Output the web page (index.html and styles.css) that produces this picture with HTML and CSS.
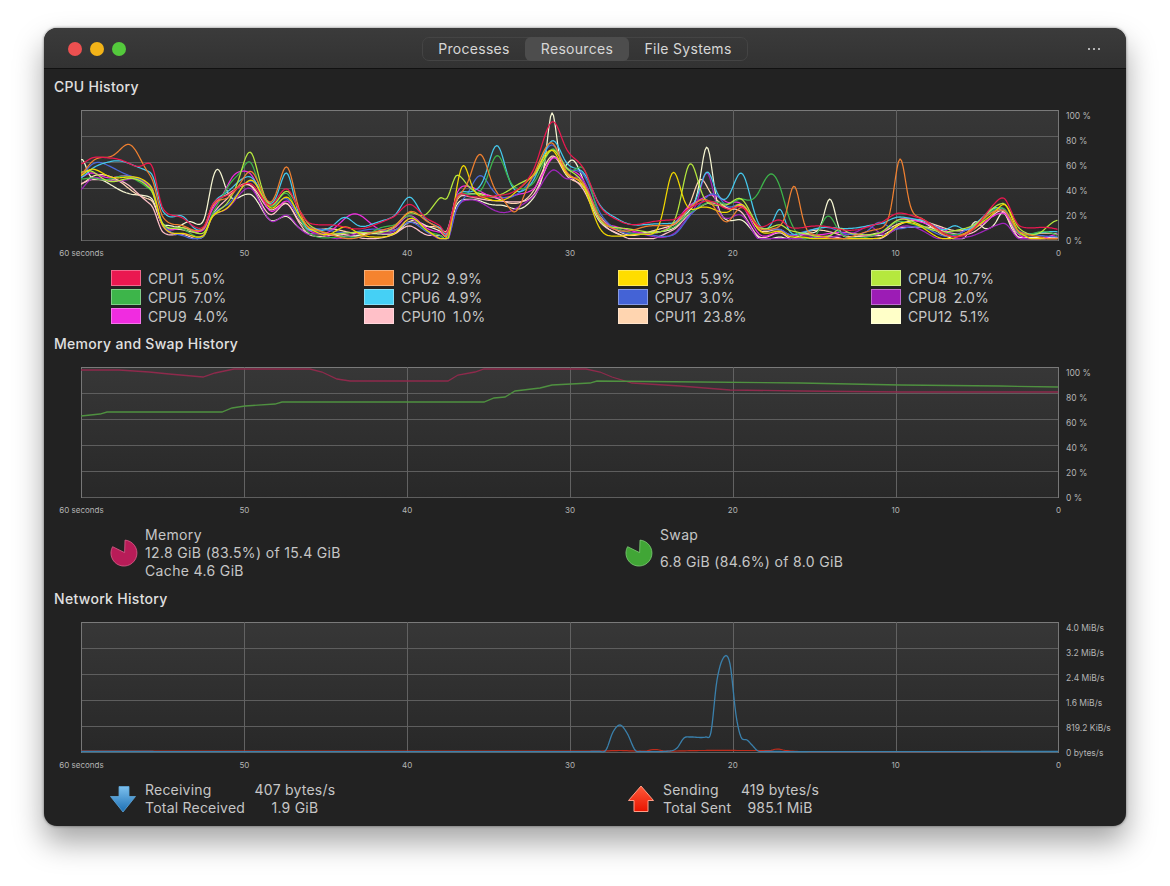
FILE: index.html
```html
<!DOCTYPE html>
<html lang="en">
<head>
<meta charset="utf-8">
<title>System Monitor</title>
<link rel="stylesheet" href="styles.css">
</head>
<body>
<main class="window">
  <header class="titlebar">
    <div class="lights"><i class="light red"></i><i class="light yellow"></i><i class="light green"></i></div>
    <nav class="tabs">
      <span class="tab t1">Processes</span>
      <span class="tab t2 active">Resources</span>
      <span class="tab t3">File Systems</span>
    </nav>
    <div class="menu"><i></i><i></i><i></i></div>
  </header>

  <section class="content">
    <h2 class="title">CPU History</h2>
    <div class="chart">
      <div class="plot-col">
        <div class="plot"><svg id="cpu" class="plot-svg" width="978" height="131" viewBox="81 110 978 131"></svg></div>
        <div class="xaxis"><span>60 seconds</span><span>50</span><span>40</span><span>30</span><span>20</span><span>10</span><span>0</span></div>
      </div>
      <div class="yaxis"><span>100 %</span><span>80 %</span><span>60 %</span><span>40 %</span><span>20 %</span><span>0 %</span></div>
    </div>
    <div class="legend">
      <div class="item"><i class="swatch c1"></i><span>CPU1</span><span class="val">5.0%</span></div>
      <div class="item"><i class="swatch c2"></i><span>CPU2</span><span class="val">9.9%</span></div>
      <div class="item"><i class="swatch c3"></i><span>CPU3</span><span class="val">5.9%</span></div>
      <div class="item"><i class="swatch c4"></i><span>CPU4</span><span class="val">10.7%</span></div>
      <div class="item"><i class="swatch c5"></i><span>CPU5</span><span class="val">7.0%</span></div>
      <div class="item"><i class="swatch c6"></i><span>CPU6</span><span class="val">4.9%</span></div>
      <div class="item"><i class="swatch c7"></i><span>CPU7</span><span class="val">3.0%</span></div>
      <div class="item"><i class="swatch c8"></i><span>CPU8</span><span class="val">2.0%</span></div>
      <div class="item"><i class="swatch c9"></i><span>CPU9</span><span class="val">4.0%</span></div>
      <div class="item"><i class="swatch c10"></i><span>CPU10</span><span class="val">1.0%</span></div>
      <div class="item"><i class="swatch c11"></i><span>CPU11</span><span class="val">23.8%</span></div>
      <div class="item"><i class="swatch c12"></i><span>CPU12</span><span class="val">5.1%</span></div>
    </div>

    <h2 class="title second">Memory and Swap History</h2>
    <div class="chart">
      <div class="plot-col">
        <div class="plot"><svg id="mem" class="plot-svg" width="978" height="131" viewBox="81 367 978 131"></svg></div>
        <div class="xaxis"><span>60 seconds</span><span>50</span><span>40</span><span>30</span><span>20</span><span>10</span><span>0</span></div>
      </div>
      <div class="yaxis"><span>100 %</span><span>80 %</span><span>60 %</span><span>40 %</span><span>20 %</span><span>0 %</span></div>
    </div>
    <div class="summary mem-summary">
      <div class="stat">
        <svg class="pie" width="28" height="28" viewBox="-14 -14 28 28"><path d="M0.6 -0.4 L1 -12.9 A13 13 0 1 1 -11.4 -6.3 Z" fill="#b81c58" stroke="#d9608c" stroke-width="0.8"/></svg>
        <div class="lines"><span>Memory</span><span>12.8 GiB (83.5%) of 15.4 GiB</span><span>Cache 4.6 GiB</span></div>
      </div>
      <div class="stat">
        <svg class="pie" width="28" height="28" viewBox="-14 -14 28 28"><path d="M0.6 -0.4 L1 -12.9 A13 13 0 1 1 -11.4 -6.3 Z" fill="#41a636" stroke="#7ecb76" stroke-width="0.8"/></svg>
        <div class="lines swap"><span>Swap</span><span>6.8 GiB (84.6%) of 8.0 GiB</span></div>
      </div>
    </div>

    <h2 class="title third">Network History</h2>
    <div class="chart">
      <div class="plot-col">
        <div class="plot"><svg id="net" class="plot-svg" width="978" height="131" viewBox="81 622 978 131"></svg></div>
        <div class="xaxis"><span>60 seconds</span><span>50</span><span>40</span><span>30</span><span>20</span><span>10</span><span>0</span></div>
      </div>
      <div class="yaxis"><span>4.0 MiB/s</span><span>3.2 MiB/s</span><span>2.4 MiB/s</span><span>1.6 MiB/s</span><span>819.2 KiB/s</span><span>0 bytes/s</span></div>
    </div>
    <div class="summary net-summary">
      <div class="stat">
        <svg class="arrow" width="26" height="28" viewBox="0 0 26 28">
          <defs><linearGradient id="down" x1="0" y1="0" x2="0" y2="1"><stop offset="0" stop-color="#7cc0ee"/><stop offset="1" stop-color="#1c6fb4"/></linearGradient></defs>
          <path d="M9 1.5 H19 V11.5 H25.5 L13 27 L0.5 11.5 H9 Z" fill="url(#down)" stroke="#5ea6d8" stroke-width="0.8"/>
        </svg>
        <div class="netgrid"><span>Receiving</span><span class="nv">407 bytes/s</span><span>Total Received</span><span class="nv">1.9 GiB</span></div>
      </div>
      <div class="stat">
        <svg class="arrow up" width="26" height="28" viewBox="0 0 26 28">
          <defs><linearGradient id="upg" x1="0" y1="0" x2="0" y2="1"><stop offset="0" stop-color="#ff5a3a"/><stop offset="1" stop-color="#e81400"/></linearGradient></defs>
          <path d="M13 1 L25.5 15.5 H20 V26.5 H6 V15.5 H0.5 Z" fill="url(#upg)" stroke="#ff9d86" stroke-width="1"/>
        </svg>
        <div class="netgrid"><span>Sending</span><span class="nv">419 bytes/s</span><span>Total Sent</span><span class="nv">985.1 MiB</span></div>
      </div>
    </div>
  </section>
</main>
<script src="charts.js"></script>
</body>
</html>
```
FILE: styles.css
```css
* { box-sizing: border-box; }
html, body { margin: 0; height: 100%; overflow: hidden; }
body {
  padding: 28px 44px;
  background: #fff;
  font-family: Inter, "Liberation Sans", sans-serif;
  color: #c6c6c6;
}
.window {
  width: 1082px;
  height: 798px;
  border-radius: 13px;
  overflow: hidden;
  background: #222;
  box-shadow: 0 0 3px rgba(0,0,0,.5), 0 16px 30px rgba(0,0,0,.36);
  display: flex;
  flex-direction: column;
}
.titlebar {
  height: 41px;
  flex: none;
  background: linear-gradient(#3b3b3b, #323232);
  border-bottom: 1px solid #111;
  display: flex;
  align-items: center;
  padding: 1px 0 0 24px;
}
.lights { display: flex; gap: 8px; }
.light { width: 14px; height: 14px; border-radius: 50%; display: block; }
.red { background: #ec5050; }
.yellow { background: #f2b318; }
.green { background: #54c93c; }
.tabs {
  margin-left: 296px;
  height: 24px;
  width: 326px;
  border: 1px solid #444;
  border-radius: 7px;
  display: flex;
  align-items: stretch;
  font-size: 14px;
  letter-spacing: .3px;
  color: #d6d6d6;
}
.tab { display: flex; align-items: center; justify-content: center; line-height: 1; }
.t1 { width: 102px; }
.t2 { width: 104px; }
.t3 { width: 118px; }
.active { background: #4d4d4d; border-radius: 6px; margin: -1px 0; }
.menu { margin-left: auto; margin-right: 26px; display: flex; gap: 3px; }
.menu i { width: 2px; height: 2px; border-radius: 50%; background: #ddd; display: block; }

.content { flex: 1; padding: 8px 0 0; }
.title {
  margin: 0 0 13px 10px;
  height: 20px;
  font-size: 14px;
  line-height: 20px;
  font-weight: 500;
  letter-spacing: .3px;
  color: #e0e0e0;
}
.second { margin-top: 10px; }
.third { margin-top: 9px; }
.chart { display: flex; padding-left: 37px; }
.plot-col { width: 978px; }
.plot {
  height: 131px;
  background: linear-gradient(#373737, #282828);
}
.plot-svg { display: block; }
.xaxis {
  height: 24px;
  display: flex;
  justify-content: space-between;
  align-items: center;
  font-size: 8px;
  color: #b4b4b4;
}
.xaxis span { width: 1px; display: flex; justify-content: center; white-space: nowrap; }
.yaxis {
  height: 135px;
  margin: 1px 0 0 7px;
  display: flex;
  flex-direction: column;
  justify-content: space-between;
  font-size: 8.5px;
  line-height: 10px;
  color: #b4b4b4;
  white-space: nowrap;
}
.legend {
  margin-top: 5px;
  padding-left: 67px;
  display: grid;
  grid-template-columns: repeat(4, 253.33px);
  row-gap: 3px;
  font-size: 14px;
  letter-spacing: .1px;
}
.item { display: flex; align-items: center; height: 16px; }
.swatch { width: 30px; height: 16px; margin-right: 7px; border: 1px solid rgba(255,255,255,.35); display: block; }
.val { margin-left: 7px; }
.c1 { background: #ea1850; }
.c2 { background: #f5832f; }
.c3 { background: #ffdd00; }
.c4 { background: #b5e83e; }
.c5 { background: #3db54a; }
.c6 { background: #45d0f5; }
.c7 { background: #4463d6; }
.c8 { background: #9c1cb5; }
.c9 { background: #f02ce0; }
.c10 { background: #ffc0c8; }
.c11 { background: #ffd5b0; }
.c12 { background: #ffffc8; }

.summary {
  padding-left: 66px;
  display: grid;
  grid-template-columns: 515px 1fr;
  font-size: 14px;
  letter-spacing: .35px;
  line-height: 18px;
  margin-top: 4px;
}
.stat { display: flex; align-items: center; }
.pie { flex: none; margin-right: 7px; }
.lines { display: flex; flex-direction: column; }
.swap { gap: 9px; align-self: flex-start; }
.arrow { flex: none; margin-right: 9px; }
.up { margin-left: 3px; }
.netgrid { display: grid; grid-template-columns: auto auto; column-gap: 9.5px; letter-spacing: .22px; }
.nv { text-align: center; }
```
FILE: charts.js
```js
var NS = 'http://www.w3.org/2000/svg';
var XS = [81, 244, 407, 570, 733, 896, 1058];

function el(parent, name, attrs) {
  var e = document.createElementNS(NS, name);
  for (var k in attrs) e.setAttribute(k, attrs[k]);
  parent.appendChild(e);
  return e;
}

function grid(svg, top) {
  for (var r = 0; r <= 5; r++) {
    var y = top + 26 * r + 0.5;
    el(svg, 'line', { x1: 81, x2: 1059, y1: y, y2: y, stroke: r === 0 ? '#7a7a7a' : '#5e5e5e' });
  }
  XS.forEach(function (x, i) {
    el(svg, 'line', { x1: x + 0.5, x2: x + 0.5, y1: top, y2: top + 131, stroke: i === 0 || i === 6 ? '#777' : '#626262' });
  });
}

// Catmull-Rom interpolation through [x, y] points
function interp(pts, x) {
  var i = 0;
  while (i < pts.length - 2 && pts[i + 1][0] < x) i++;
  var p1 = pts[i], p2 = pts[i + 1];
  var p0 = pts[Math.max(i - 1, 0)], p3 = pts[Math.min(i + 2, pts.length - 1)];
  var h = p2[0] - p1[0], t = Math.min(1, Math.max(0, (x - p1[0]) / h));
  var m1 = (p2[1] - p0[1]) / (p2[0] - p0[0]) * h;
  var m2 = (p3[1] - p1[1]) / (p3[0] - p1[0]) * h;
  var t2 = t * t, t3 = t2 * t;
  return (2 * t3 - 3 * t2 + 1) * p1[1] + (t3 - 2 * t2 + t) * m1 + (-2 * t3 + 3 * t2) * p2[1] + (t3 - t2) * m2;
}

function toPath(f, x0, x1, step) {
  var d = '';
  for (var x = x0; x <= x1 + 0.01; x += step) {
    d += (d ? 'L' : 'M') + x.toFixed(1) + ' ' + f(x).toFixed(2);
  }
  return d;
}

var CPU_BASE = [[81,172],[93,165],[110,170],[130,175],[147,183],[153,190],[163,222],[183,228],[203,232],[213,210],[227,200],[250,182],[270,210],[287,198],[300,217],[310,228],[340,232],[370,232],[393,228],[410,215],[427,227],[440,233],[447,237],[457,200],[470,195],[497,200],[513,197],[533,180],[552,142],[567,162],[583,175],[600,215],[617,228],[640,232],[673,227],[690,210],[707,203],[727,210],[742,208],[760,232],[780,228],[790,233],[810,232],[847,235],[880,233],[900,221],[920,223],[947,235],[970,232],[1003,210],[1020,232],[1058,235]];

var CPU = [
  { c: '#ea1850', s: 1.09, b: [[150,8,6],[1003,4,6]] },
  { c: '#f08030', s: 1.02, b: [[105,14,14],[130,36,11],[250,8,7],[287,28,7],[480,38,8],[516,-18,7],[725,-12,8],[794,50,6],[900,58,5.5]] },
  { c: '#f2d800', s: 0.98, b: [[463,34,6],[125,10,18],[345,14,10],[673,60,7.5],[600,-4,9],[1005,6,6]] },
  { c: '#b5e83e', s: 0.93, b: [[250,24,7],[445,40,13],[690,47,7.5],[1058,16,12],[840,6,5]] },
  { c: '#3db54a', s: 1.01, b: [[230,10,8],[250,14,6],[380,6,10],[497,38,8],[585,20,8],[770,58,13],[828,22,7],[1040,10,14]] },
  { c: '#45c8ec', s: 1.05, b: [[183,6,7],[287,22,6],[345,12,8],[410,11,8],[497,46,8],[707,25,6],[742,32,8.5],[780,18,5],[955,8,6]] },
  { c: '#4a68d8', s: 0.96, b: [[480,18,8],[880,14,8],[715,10,8],[830,6,10]] },
  { c: '#a024bc', s: 0.9, b: [[707,38,6],[320,6,8],[870,10,8]] },
  { c: '#f02ce0', s: 0.94, b: [[150,4,6],[232,10,7],[355,17,14],[715,5,8],[955,-6,6]] },
  { c: '#ffc0c8', s: 0.88, b: [[300,0,6],[1003,6,8]] },
  { c: '#ffd5b0', s: 0.83, b: [[745,6,7],[995,8,8],[700,20,6],[930,-3,8]] },
  { c: '#f5f5d2', s: 0.8, b: [[81,32,5],[217,36,7],[552,56,4.5],[572,24,7],[707,58,5.5],[830,37,5.5],[960,-4,5],[975,12,5],[1003,14,5],[170,5,5],[190,10,8],[505,10,10]] }
];

function noise(i, x) {
  var a = 1.7 + i * 0.37, b = 4.1 + i * 1.3;
  return Math.sin(x / 19 + a) * 2.4 + Math.sin(x / 8.7 + b) * 1.6 + Math.sin(x / 37 + a * b) * 3;
}

function drawCpu() {
  var svg = document.getElementById('cpu');
  grid(svg, 110);
  for (var i = CPU.length - 1; i >= 0; i--) {
    (function (line, i) {
      var offset = ((i * 5) % 12 - 5.5) * 0.8;
      var f = function (x) {
        var v = 240 - interp(CPU_BASE, x);
        var y = 240 - v * line.s + offset;
        y += noise(i, x) * (0.85 + v / 60);
        line.b.forEach(function (b) {
          y -= b[1] * Math.exp(-Math.pow((x - b[0]) / b[2], 2) / 2);
        });
        return Math.min(238.5, Math.max(112, y));
      };
      el(svg, 'path', { d: toPath(f, 81, 1058, 1.5), fill: 'none', stroke: line.c, 'stroke-width': 1.25, 'stroke-linejoin': 'round' });
    })(CPU[i], i);
  }
}

function poly(svg, pts, color, w) {
  var d = pts.map(function (p, i) { return (i ? 'L' : 'M') + p[0] + ' ' + p[1]; }).join('');
  el(svg, 'path', { d: d, fill: 'none', stroke: color, 'stroke-width': w });
}

function drawMem() {
  var svg = document.getElementById('mem');
  grid(svg, 367);
  poly(svg, [[81,370],[119,370],[149,372],[169,374],[203,377],[215,373],[234,369],[310,369],[322,372],[337,379],[350,381],[448,381],[458,375],[475,372],[484,369],[586,369],[600,372],[612,377],[632,383],[680,386],[730,390],[800,391],[900,392],[1058,392]], '#8e2a4c', 1.3);
  poly(svg, [[81,416],[100,414],[107,412],[222,412],[232,408],[245,406],[275,404],[282,402],[484,402],[494,398],[505,397],[515,391],[540,388],[552,385],[590,383],[597,381],[700,382],[800,383],[900,385],[1000,386],[1058,387]], '#4f9140', 1.3);
}

function drawNet() {
  var svg = document.getElementById('net');
  grid(svg, 622);
  var red = [[81,751],[600,751],[620,750.5],[635,751],[645,751],[655,749.5],[665,751],[700,750.5],[757,750.5],[770,750.5],[777,749],[786,750.5],[800,751.5],[1058,751.5]];
  el(svg, 'path', { d: toPath(function (x) { return interp(red, x); }, 81, 1058, 2), fill: 'none', stroke: '#c02c1c', 'stroke-width': 1.2 });
  var blue = [[81,751.5],[600,751.5],[606,750],[613,732],[620,725],[627,733],[635,750],[640,751.5],[670,751],[677,748],[684,738],[690,737],[706,737],[711,732],[717,680],[724,657],[730,664],[736,715],[741,737],[747,740],[752,745],[758,751],[765,751.5],[1058,751.5]];
  el(svg, 'path', { d: toPath(function (x) { return interp(blue, x); }, 81, 1058, 1), fill: 'none', stroke: '#3a80ac', 'stroke-width': 1.3 });
}

drawCpu();
drawMem();
drawNet();
```
